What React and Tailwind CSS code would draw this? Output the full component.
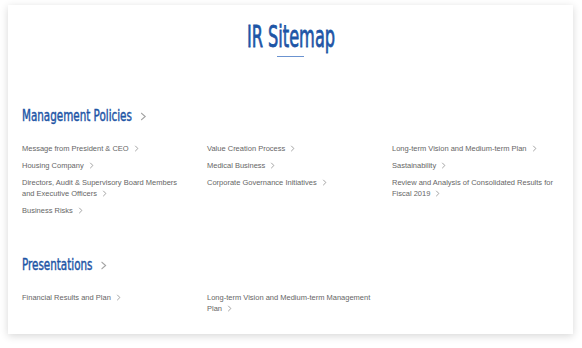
import React from 'react';

const management = [
  [
    ['Message from President & CEO'],
    ['Housing Company'],
    ['Directors, Audit & Supervisory Board Members', 'and Executive Officers'],
    ['Business Risks'],
  ],
  [
    ['Value Creation Process'],
    ['Medical Business'],
    ['Corporate Governance Initiatives'],
  ],
  [
    ['Long-term Vision and Medium-term Plan'],
    ['Sastainability'],
    ['Review and Analysis of Consolidated Results for', 'Fiscal 2019'],
  ],
];

const presentations = [
  [['Financial Results and Plan']],
  [['Long-term Vision and Medium-term Management', 'Plan']],
  [],
];

const Chevron = () => (
  <svg width="5" height="7" viewBox="0 0 5 7" className="inline-block ml-[5px] align-[-0.5px]">
    <path d="M1.2 0.8 L3.9 3.5 L1.2 6.2" stroke="#9a9a9a" strokeWidth="0.9" fill="none" />
  </svg>
);

// sits inside the squeezed heading, so it is drawn wider than it shows
const BigChevron = () => (
  <svg width="9" height="9" viewBox="0 0 9 9" className="inline-block ml-[11px] align-[0px]">
    <path d="M1.5 1 L7 4.5 L1.5 8" stroke="#a3a3a3" strokeWidth="1.4" fill="none" />
  </svg>
);

function LinkItem({ lines }) {
  return (
    <a href="#" className="block text-[7.5px] leading-[11px] text-[#666]">
      {lines.map((l, i) => (
        <React.Fragment key={i}>
          {i > 0 && <br />}
          {l}
        </React.Fragment>
      ))}
      <Chevron />
    </a>
  );
}

function Section({ title, columns, className }) {
  return (
    <section className={className}>
      <h3 className="h-[20px] leading-[20px] text-[16px] text-[#1d55a6] [-webkit-text-stroke:0.45px_#1d55a6] font-['DejaVu_Sans_Condensed','DejaVu_Sans',sans-serif]">
        <span className="inline-block origin-left scale-x-[0.72] whitespace-nowrap">
          {title}
          <BigChevron />
        </span>
      </h3>
      <div className="mt-[17px] grid grid-cols-[185px_185px_1fr]">
        {columns.map((col, ci) => (
          <div key={ci} className="flex flex-col gap-[6px]">
            {col.map((lines, li) => (
              <LinkItem key={li} lines={lines} />
            ))}
          </div>
        ))}
      </div>
    </section>
  );
}

export default function App() {
  return (
    <div className="w-[582px] h-[348px] bg-white pl-[8px] pr-[9px] pt-[5px] pb-[14px] font-['Liberation_Sans',Arial,sans-serif]">
      <div className="h-full bg-white shadow-[0_2px_8px_rgba(0,0,0,0.16)] px-[14px] pt-[14px]">
        <div className="flex flex-col items-center">
          <h2 className="h-[34px] leading-[34px] text-[31px] text-[#1d55a6] [-webkit-text-stroke:0.8px_#1d55a6] font-['DejaVu_Sans_Condensed','DejaVu_Sans',sans-serif]">
            <span className="inline-block scale-x-[0.58] whitespace-nowrap">IR Sitemap</span>
          </h2>
          <div className="mt-[3px] w-[27px] h-px bg-[#6b93d0]" />
        </div>
        <Section title="Management Policies" columns={management} className="mt-[49px]" />
        <Section title="Presentations" columns={presentations} className="mt-[39px]" />
      </div>
    </div>
  );
}
